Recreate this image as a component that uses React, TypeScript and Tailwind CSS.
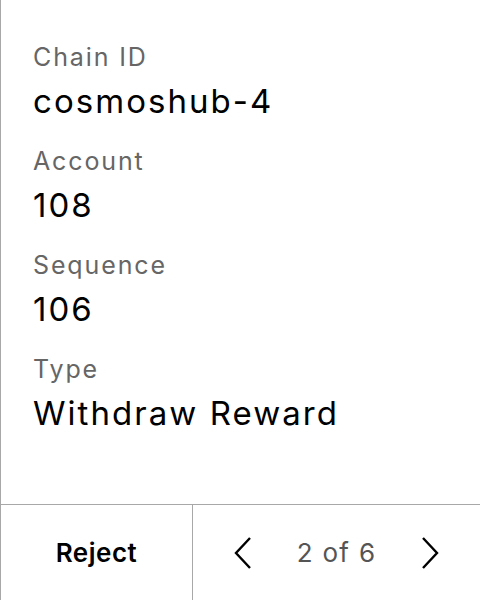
import React from 'react';

const rows = [
  { label: 'Chain ID', value: 'cosmoshub-4' },
  { label: 'Account', value: '108' },
  { label: 'Sequence', value: '106' },
  { label: 'Type', value: 'Withdraw Reward' },
];

export default function App() {
  return (
    <div
      className="flex flex-col w-[480px] h-[600px] bg-white border-l border-[#a8a8a8] text-black"
      style={{ fontFamily: 'Inter, "Noto Sans", sans-serif' }}
    >
      {/* Details */}
      <div className="flex-1 flex flex-col gap-[17px] pl-[32px] pt-[38px]">
        {rows.map((row) => (
          <div key={row.label} className="flex flex-col">
            <span className="text-[25px] leading-[38px] tracking-[0.075em] text-[#666666]">{row.label}</span>
            <span className="text-[33px] leading-[48px] mt-[1px] tracking-[0.062em]">{row.value}</span>
          </div>
        ))}
      </div>

      {/* Footer */}
      <div className="flex h-[96px] border-t border-[#a8a8a8]">
        <button className="w-[191px] flex items-center justify-center text-[26px] font-semibold tracking-[0.02em]">
          Reject
        </button>
        <div className="flex-1 flex items-center justify-between border-l border-[#a8a8a8] px-[40px]">
          <svg width="20" height="34" viewBox="0 0 20 34" fill="none">
            <path d="M17 2 L3 17 L17 32" stroke="black" strokeWidth="2.4" />
          </svg>
          <span className="text-[26px] tracking-[0.05em] text-[#555555]">2 of 6</span>
          <svg width="20" height="34" viewBox="0 0 20 34" fill="none">
            <path d="M3 2 L17 17 L3 32" stroke="black" strokeWidth="2.4" />
          </svg>
        </div>
      </div>
    </div>
  );
}
